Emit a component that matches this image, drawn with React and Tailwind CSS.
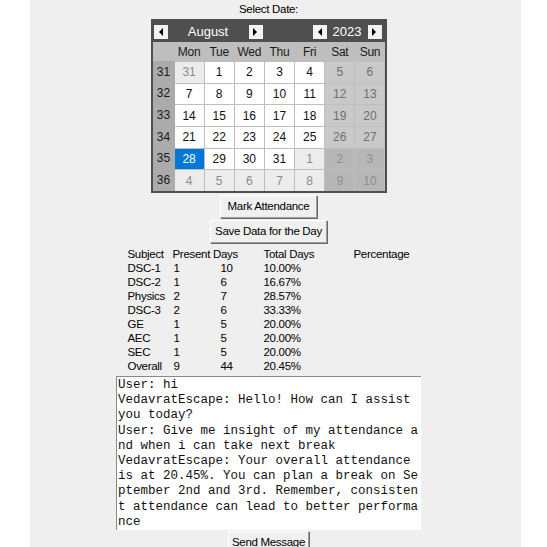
const weeks = [
  { n: 31, days: [[31, 'o'], [1], [2], [3], [4], [5, 'w'], [6, 'w']] },
  { n: 32, days: [[7], [8], [9], [10], [11], [12, 'w'], [13, 'w']] },
  { n: 33, days: [[14], [15], [16], [17], [18], [19, 'w'], [20, 'w']] },
  { n: 34, days: [[21], [22], [23], [24], [25], [26, 'w'], [27, 'w']] },
  { n: 35, days: [[28, 's'], [29], [30], [31], [1, 'o'], [2, 'ow'], [3, 'ow']] },
  { n: 36, days: [[4, 'o'], [5, 'o'], [6, 'o'], [7, 'o'], [8, 'o'], [9, 'ow'], [10, 'ow']] },
];

const dayNames = ['Mon', 'Tue', 'Wed', 'Thu', 'Fri', 'Sat', 'Sun'];

const rows = [
  ['DSC-1', '1', '10', '10.00%'],
  ['DSC-2', '1', '6', '16.67%'],
  ['Physics', '2', '7', '28.57%'],
  ['DSC-3', '2', '6', '33.33%'],
  ['GE', '1', '5', '20.00%'],
  ['AEC', '1', '5', '20.00%'],
  ['SEC', '1', '5', '20.00%'],
  ['Overall', '9', '44', '20.45%'],
];

const chat = [
  'User: hi',
  'VedavratEscape: Hello! How can I assist',
  'you today?',
  'User: Give me insight of my attendance a',
  'nd when i can take next break',
  'VedavratEscape: Your overall attendance',
  'is at 20.45%. You can plan a break on Se',
  'ptember 2nd and 3rd. Remember, consisten',
  't attendance can lead to better performa',
  'nce',
];

const cellStyle = {
  '': 'bg-white text-[#111]',
  o: 'bg-[#ececec] text-[#8a8a8a]',
  w: 'bg-[#c9c9c9] text-[#6f6f6f]',
  ow: 'bg-[#b7b7b7] text-[#8e8e8e]',
  s: 'bg-[#0078d7] text-white',
};

const Arrow = ({ dir }) => (
  <div className="w-[14px] h-[14px] bg-[#f3f3f3] flex items-center justify-center">
    <svg width="5" height="8" viewBox="0 0 5 8">
      {dir === 'left' ? <polygon points="5,0 5,8 1,4" fill="#000" /> : <polygon points="0,0 0,8 4,4" fill="#000" />}
    </svg>
  </div>
);

const Button = ({ children, w }) => (
  <div
    className={`${w} h-[23px] flex items-center justify-center bg-[#f0f0f0] border border-white border-r-[#a0a0a0] border-b-[#a0a0a0] shadow-[1px_1px_0_#696969] text-[11.5px] tracking-[-0.3px] text-black`}
  >
    {children}
  </div>
);

export default function App() {
  return (
    <div className="w-[547px] h-[547px] bg-white overflow-hidden" style={{ fontFamily: '"Liberation Sans", Arial, sans-serif' }}>
      <div className="ml-[30px] w-[491px] h-full bg-[#efefef] pr-[14px] flex flex-col items-center">
        <div className="h-[19px] leading-[19px] text-[11.5px] tracking-[-0.3px] text-black">Select Date:</div>

        <div className="w-[236px] border-2 border-[#4f4f4f] bg-[#4f4f4f]">
          <div className="h-[21px] flex items-center text-[13px] text-white">
            <div className="ml-[1px]"><Arrow dir="left" /></div>
            <div className="w-[81px] text-center">August</div>
            <Arrow dir="right" />
            <div className="w-[50px]" />
            <Arrow dir="left" />
            <div className="w-[41px] text-center">2023</div>
            <Arrow dir="right" />
          </div>
          <div className="flex h-[149px]">
            <div className="w-[22px] grid grid-rows-[19px_repeat(6,minmax(0,1fr))] text-[12px] text-[#1a1a1a]">
              <div className="bg-[#bebebe]" />
              {weeks.map((wk) => (
                <div key={wk.n} className="bg-[#ababab] flex items-center justify-center">{wk.n}</div>
              ))}
            </div>
            <div className="w-[210px] grid grid-cols-7 grid-rows-[19px_repeat(6,minmax(0,1fr))] gap-px bg-[#bebebe] text-[12px]">
              {dayNames.map((d) => (
                <div key={d} className="bg-[#bebebe] flex items-center justify-center text-[#1a1a1a] tracking-[-0.3px]">{d}</div>
              ))}
              {weeks.map((wk) =>
                wk.days.map(([num, kind = ''], i) => (
                  <div key={`${wk.n}-${i}`} className={`flex items-center justify-center ${cellStyle[kind]}`}>{num}</div>
                ))
              )}
            </div>
          </div>
        </div>

        <div className="mt-[2px]"><Button w="w-[97px]">Mark Attendance</Button></div>
        <div className="mt-[2px]"><Button w="w-[117px]">Save Data for the Day</Button></div>

        <div className="mt-[4px] w-[282px] text-[11.5px] tracking-[-0.3px] leading-[14px] text-black">
          <div className="flex">
            <div className="w-[45px]">Subject</div>
            <div className="w-[91px]">Present Days</div>
            <div className="w-[90px]">Total Days</div>
            <div>Percentage</div>
          </div>
          {rows.map((r) => (
            <div key={r[0]} className="flex">
              <div className="w-[46px]">{r[0]}</div>
              <div className="w-[47px]">{r[1]}</div>
              <div className="w-[43px]">{r[2]}</div>
              <div>{r[3]}</div>
            </div>
          ))}
        </div>

        <div
          className="mt-[3px] w-[305px] h-[155px] bg-white border-t border-l border-[#8a8a8a] pl-[1px] pt-[1px] text-[12.5px] leading-[15.2px] text-[#111] whitespace-pre"
          style={{ fontFamily: '"Liberation Mono", "Courier New", monospace' }}
        >
          {chat.map((l, i) => (
            <div key={i}>{l}</div>
          ))}
        </div>

        <div className="mt-[1px]"><Button w="w-[81px]">Send Message</Button></div>
      </div>
    </div>
  );
}
